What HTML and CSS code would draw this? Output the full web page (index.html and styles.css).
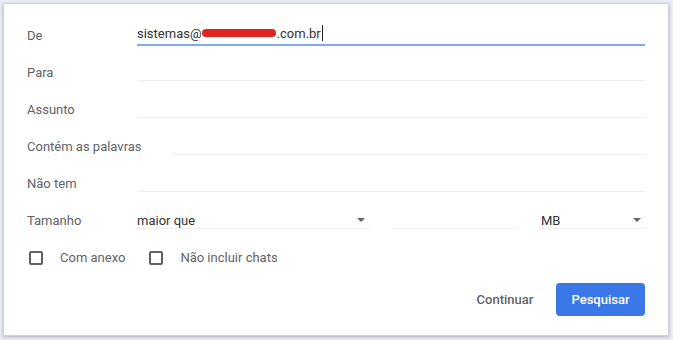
FILE: index.html
```html
<!DOCTYPE html>
<html lang="pt-BR">
<head>
<meta charset="utf-8">
<title>Pesquisa</title>
<link rel="stylesheet" href="styles.css">
</head>
<body>
<div class="dialog">
  <div class="row">
    <div class="label">De</div>
    <div class="field focused"><span class="value">sistemas@<span class="redact"></span>.com.br</span><span class="caret"></span></div>
  </div>
  <div class="row">
    <div class="label">Para</div>
    <div class="field"></div>
  </div>
  <div class="row">
    <div class="label">Assunto</div>
    <div class="field"></div>
  </div>
  <div class="row">
    <div class="label">Contém as palavras</div>
    <div class="field"></div>
  </div>
  <div class="row">
    <div class="label">Não tem</div>
    <div class="field"></div>
  </div>
  <div class="row">
    <div class="label">Tamanho</div>
    <div class="size">
      <div class="field select sel-op"><span class="value">maior que</span><span class="arrow"></span></div>
      <div class="field num"></div>
      <div class="field select sel-unit"><span class="value">MB</span><span class="arrow"></span></div>
    </div>
  </div>
  <div class="row checks">
    <label class="check"><span class="box"></span><span>Com anexo</span></label>
    <label class="check"><span class="box"></span><span>Não incluir chats</span></label>
  </div>
  <div class="actions">
    <button class="btn flat">Continuar</button>
    <button class="btn primary">Pesquisar</button>
  </div>
</div>
</body>
</html>
```

FILE: styles.css
```css
html, body {
  margin: 0;
  padding: 0;
}
body {
  width: 673px;
  height: 340px;
  background: #e9edf3;
  font-family: Roboto, "Noto Sans", Arial, sans-serif;
  font-size: 13px;
  color: #5f6368;
  padding: 3px 4px 4px 3px;
  box-sizing: border-box;
}
.dialog {
  box-sizing: border-box;
  height: 333px;
  background: #fff;
  border: 1px solid #d3d3d3;
  box-shadow: 0 1px 3px rgba(0, 0, 0, 0.25);
  padding: 13px 23px 0 23px;
}
.row {
  display: flex;
  align-items: center;
  height: 37px;
}
.label {
  box-sizing: border-box;
  min-width: 110px;
  padding-right: 30px;
  white-space: nowrap;
  color: #5f6368;
}
.field {
  flex: 1;
  box-sizing: border-box;
  height: 17px;
  margin-top: 0;
  border-bottom: 1px solid #efefef;
  display: flex;
  align-items: center;
  color: #333;
  position: relative;
}
.field.focused {
  border-bottom: 2px solid #7fa8f5;
  height: 20px;
  margin-top: 0;
  padding-bottom: 3px;
}
.value {
  white-space: nowrap;
  display: inline-flex;
  align-items: center;
}
.redact {
  display: inline-block;
  width: 74px;
  height: 8px;
  background: #e0261f;
  border-radius: 4px;
  margin: 0 1px 0 0;
}
.caret {
  display: inline-block;
  width: 1px;
  height: 16px;
  background: #222;
  margin-left: 1px;
}
.size {
  flex: 1;
  display: flex;
  gap: 23px;
}
.select {
  justify-content: space-between;
  color: #333;
  padding-bottom: 0;
}
.sel-op { flex: 0 0 232px; }
.num { flex: 0 0 126px; }
.sel-unit { flex: 0 0 104px; }
.arrow {
  width: 0;
  height: 0;
  border-left: 4px solid transparent;
  border-right: 4px solid transparent;
  border-top: 4px solid #666;
  margin-right: 4px;
}
.checks {
  gap: 24px;
  padding-left: 2px;
}
.check {
  display: flex;
  align-items: center;
  gap: 17px;
  color: #5f6368;
}
.box {
  box-sizing: border-box;
  width: 14px;
  height: 14px;
  border: 2px solid #5f6368;
  border-radius: 2px;
}
.actions {
  display: flex;
  justify-content: flex-end;
  align-items: center;
  gap: 13px;
  margin-top: 7px;
}
.btn {
  font-family: Roboto, "Noto Sans", Arial, sans-serif;
  font-size: 13px;
  border: none;
  background: none;
  height: 33px;
  border-radius: 4px;
  cursor: pointer;
  padding: 0;
}
.flat {
  color: #5f6368;
  font-weight: 500;
  width: 76px;
}
.primary {
  background: #3b78e7;
  color: #fff;
  font-weight: 500;
  width: 89px;
}
```
